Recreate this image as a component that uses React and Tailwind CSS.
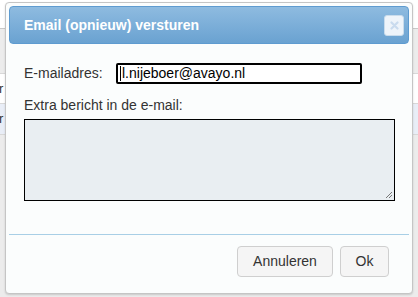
export default function App() {
  return (
    <div
      className="relative h-[297px] w-[418px] overflow-hidden bg-[#ececec]"
      style={{ fontFamily: '"Liberation Sans", Arial, sans-serif' }}
    >
      {/* page behind the dialog */}
      <div className="flex flex-col">
        <div className="h-[29px] border-b border-[#c8c8c8] bg-white" />
        <div className="h-[44px]" />
        <div className="flex h-[31px] items-center border-y border-[#d8d8d8] bg-white text-[13px] text-[#333]">
          <span className="-ml-[1px]">r</span>
        </div>
        <div className="flex h-[31px] items-center border-b border-[#d8d8d8] bg-[#e9eef7] text-[13px] text-[#333]">
          <span className="-ml-[1px]">r</span>
        </div>
      </div>

      {/* dialog */}
      <div className="absolute left-[5px] top-[2px] flex h-[292px] w-[408px] flex-col rounded-[4px] border border-[#c5c5c5] bg-[#fbfdfd] p-[3px] shadow-[0_1px_2px_rgba(0,0,0,0.15)]">
        <div className="flex h-[38px] items-center justify-between rounded-[4px] border border-[#5e9bd0] bg-gradient-to-b from-[#8ebbe0] to-[#6aa2d1] pl-[14px] pr-[4px]">
          <span className="text-[14px] font-bold text-white">Email (opnieuw) versturen</span>
          <button className="flex h-[21px] w-[20px] items-center justify-center rounded-[3px] border border-[#c9dcec] bg-[#eef4fa]">
            <svg width="9" height="9" viewBox="0 0 9 9">
              <path d="M1.5 1.5l6 6M7.5 1.5l-6 6" stroke="#c9dbee" strokeWidth="2.2" strokeLinecap="round" />
            </svg>
          </button>
        </div>

        <div className="flex flex-col pl-[15px] pr-[15px] pt-[19px]">
          <div className="flex items-center">
            <label className="w-[92px] text-[14px] leading-[17px] text-[#333]">E-mailadres:</label>
            <div className="flex h-[21px] w-[246px] items-center rounded-[2px] border-2 border-black bg-white pl-[2px] text-[14px] text-black">
              <span className="mr-[1px] h-[15px] w-px bg-black" />
              l.nijeboer@avayo.nl
            </div>
          </div>
          <div className="mt-[13px] text-[14px] leading-[17px] text-[#333]">Extra bericht in de e-mail:</div>
          <div className="relative mt-[5px] h-[82px] w-[371px] border-[1.5px] border-black bg-[#e9eef2]">
            <svg className="absolute bottom-[1px] right-[1px]" width="8" height="8" viewBox="0 0 8 8">
              <path d="M7 1L1 7M7 4L4 7" stroke="#777" strokeWidth="1" />
            </svg>
          </div>
        </div>

        <div className="mt-[33px] border-t border-[#a8cfe6]" />

        <div className="flex justify-end gap-[7px] pr-[20px] pt-[11px]">
          <button className="h-[31px] w-[96px] rounded-[4px] border border-[#cfcfcf] bg-[#f5f5f5] text-[14px] text-[#333]">
            Annuleren
          </button>
          <button className="h-[31px] w-[49px] rounded-[4px] border border-[#cfcfcf] bg-[#f5f5f5] text-[14px] text-[#333]">
            Ok
          </button>
        </div>
      </div>
    </div>
  );
}
